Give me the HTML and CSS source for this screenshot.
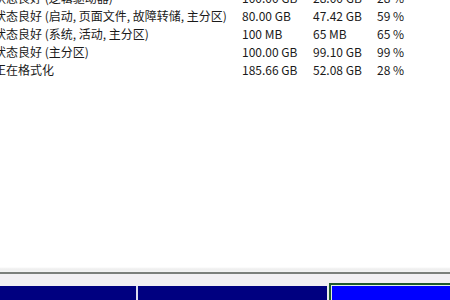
FILE: index.html
```html
<!DOCTYPE html>
<html>
<head>
<meta charset="utf-8">
<link rel="stylesheet" href="styles.css">
</head>
<body>
<div class="page">
  <div class="list">
    <div class="row"><span class="c1">状态良好 (逻辑驱动器)</span><span class="c2">100.00 GB</span><span class="c3">28.00 GB</span><span class="c4">28 %</span></div>
    <div class="row"><span class="c1">状态良好 (启动, 页面文件, 故障转储, 主分区)</span><span class="c2">80.00 GB</span><span class="c3">47.42 GB</span><span class="c4">59 %</span></div>
    <div class="row"><span class="c1">状态良好 (系统, 活动, 主分区)</span><span class="c2">100 MB</span><span class="c3">65 MB</span><span class="c4">65 %</span></div>
    <div class="row"><span class="c1">状态良好 (主分区)</span><span class="c2">100.00 GB</span><span class="c3">99.10 GB</span><span class="c4">99 %</span></div>
    <div class="row"><span class="c1">正在格式化</span><span class="c2">185.66 GB</span><span class="c3">52.08 GB</span><span class="c4">28 %</span></div>
  </div>
  <div class="splitter">
    <div class="sp-light"></div>
    <div class="sp-line"></div>
    <div class="sp-strip"></div>
  </div>
  <div class="disks">
    <div class="part navy p1"></div>
    <div class="sep"></div>
    <div class="part navy p2"></div>
    <div class="gap"></div>
    <div class="part sel"><div class="sel-inner"></div></div>
  </div>
</div>
</body>
</html>
```
FILE: styles.css
```css
html, body {
  margin: 0;
  padding: 0;
  background: #ffffff;
  overflow: hidden;
}
.page {
  width: 450px;
  height: 300px;
  display: flex;
  flex-direction: column;
  position: relative;
}
.list {
  height: 267px;
  background: #ffffff;
  overflow: hidden;
  font-family: "Noto Sans CJK SC", "Noto Sans", sans-serif;
  font-size: 12px;
  color: #1a1a1a;
}
.list .row:first-child {
  margin-top: -11px;
}
.row {
  display: flex;
  height: 18px;
  line-height: 18px;
  white-space: nowrap;
}
.c1 {
  width: 248px;
  margin-left: -6px;
  flex: none;
}
.c2 {
  width: 71px;
  flex: none;
}
.c3 {
  width: 64px;
  flex: none;
}
.c4 {
  flex: none;
}
.splitter {
  display: flex;
  flex-direction: column;
  height: 16px;
}
.sp-light {
  height: 5px;
  background: linear-gradient(#ffffff, #eeeeee 40%, #f4f4f4);
}
.sp-line {
  height: 2px;
  background: #7b7f7b;
}
.sp-strip {
  height: 9px;
  background: #f2f0f3;
}
.disks {
  flex: 1;
  display: flex;
  align-items: flex-end;
  background: #f2f0f3;
  position: relative;
  margin-top: -3px;
}
.part {
  height: 14px;
}
.navy {
  background: #000080;
}
.p1 {
  width: 136px;
}
.sep {
  width: 2px;
  height: 14px;
  background: #dcdcf0;
}
.p2 {
  width: 189px;
}
.gap {
  width: 2px;
  height: 14px;
  background: #e8eee8;
}
.sel {
  flex: 1;
  height: 17px;
  background: #1e5a2c;
  padding: 2px 0 0 2px;
  box-sizing: border-box;
  display: flex;
}
.sel-inner {
  flex: 1;
  border-top: 1px solid #e0f0e0;
  border-left: 1px solid #e0f0e0;
  background: #0000ff;
}
```
